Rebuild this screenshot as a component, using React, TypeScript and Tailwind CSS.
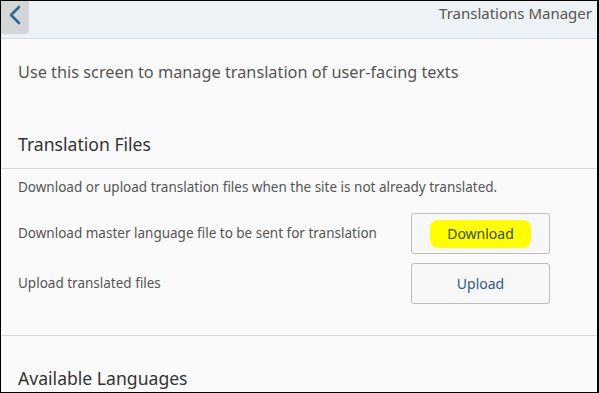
import React from "react";

export default function App() {
  const font = { fontFamily: '"Noto Sans", "Open Sans", sans-serif' };
  return (
    <div
      className="w-[599px] h-[393px] overflow-hidden border-l border-t border-b border-r-2 border-black bg-[#fafafa] flex flex-col"
      style={font}
    >
      <div className="h-[38px] shrink-0 bg-[#edf2f6] border-b border-[#d4dbe1] flex items-start justify-between">
        <div className="w-[28px] h-[33px] bg-[#d3d6d8] rounded-br-[4px] flex items-start justify-center pt-[4px]">
          <svg width="16" height="20" viewBox="0 0 16 20">
            <path d="M12 2 L4 10 L12 18" fill="none" stroke="#3a6489" strokeWidth="2.6" strokeLinecap="round" strokeLinejoin="round" />
          </svg>
        </div>
        <div className="text-[15px] text-[#555] pr-[5px] pt-[2px] leading-[20px]">Translations Manager</div>
      </div>
      <div className="pl-[17px] pt-[23px] text-[16.3px] text-[#555] leading-[20px] shrink-0">
        Use this screen to manage translation of user-facing texts
      </div>
      <div className="pl-[17px] pt-[50px] text-[17.6px] text-[#333] leading-[24px] shrink-0">Translation Files</div>
      <div className="mt-[12px] border-b border-[#d9d9d9] shrink-0" />
      <div className="pl-[17px] pt-[9px] text-[13.5px] text-[#555] leading-[18px] shrink-0">
        Download or upload translation files when the site is not already translated.
      </div>
      <div className="flex items-center justify-between pl-[17px] pr-[47px] mt-[17px] shrink-0">
        <span className="text-[13.5px] text-[#555]">Download master language file to be sent for translation</span>
        <button className="w-[139px] h-[41px] border border-[#bdbdbd] rounded-[3px] bg-[#f7f7f7] flex items-center justify-center">
          <span className="bg-[#ffff00] text-[#3a4a14] text-[14px] px-[17px] py-[5px] rounded-[8px] leading-[18px]">Download</span>
        </button>
      </div>
      <div className="flex items-center justify-between pl-[17px] pr-[47px] mt-[9px] shrink-0">
        <span className="text-[13.5px] text-[#555]">Upload translated files</span>
        <button className="w-[139px] h-[41px] border border-[#bdbdbd] rounded-[3px] bg-[#f7f7f7] flex items-center justify-center">
          <span className="text-[#2f5b82] text-[14px]">Upload</span>
        </button>
      </div>
      <div className="mt-[31px] border-b border-[#d9d9d9] shrink-0" />
      <div className="pl-[17px] pt-[30px] text-[17.6px] text-[#333] leading-[24px] shrink-0">Available Languages</div>
    </div>
  );
}
